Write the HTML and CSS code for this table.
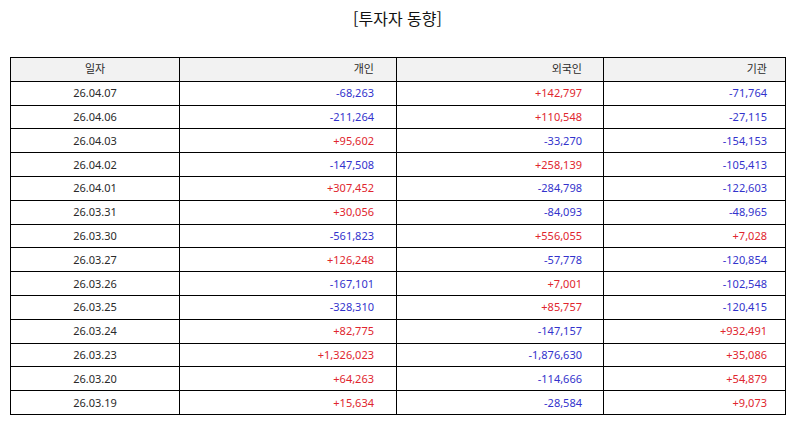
FILE: index.html
```html
<!DOCTYPE html>
<html lang="ko">
<head>
<meta charset="utf-8">
<link rel="stylesheet" href="styles.css">
</head>
<body>
<div class="page">
  <h1 class="title">[투자자 동향]</h1>
  <table class="grid">
    <colgroup>
      <col class="c-date"><col class="c-ind"><col class="c-for"><col class="c-ins">
    </colgroup>
    <thead>
      <tr><th class="date">일자</th><th class="num p1">개인</th><th class="num p2">외국인</th><th class="num p3">기관</th></tr>
    </thead>
    <tbody>
      <tr><td class="date">26.04.07</td><td class="num p1 neg">-68,263</td><td class="num p2 pos">+142,797</td><td class="num p3 neg">-71,764</td></tr>
      <tr><td class="date">26.04.06</td><td class="num p1 neg">-211,264</td><td class="num p2 pos">+110,548</td><td class="num p3 neg">-27,115</td></tr>
      <tr><td class="date">26.04.03</td><td class="num p1 pos">+95,602</td><td class="num p2 neg">-33,270</td><td class="num p3 neg">-154,153</td></tr>
      <tr><td class="date">26.04.02</td><td class="num p1 neg">-147,508</td><td class="num p2 pos">+258,139</td><td class="num p3 neg">-105,413</td></tr>
      <tr><td class="date">26.04.01</td><td class="num p1 pos">+307,452</td><td class="num p2 neg">-284,798</td><td class="num p3 neg">-122,603</td></tr>
      <tr><td class="date">26.03.31</td><td class="num p1 pos">+30,056</td><td class="num p2 neg">-84,093</td><td class="num p3 neg">-48,965</td></tr>
      <tr><td class="date">26.03.30</td><td class="num p1 neg">-561,823</td><td class="num p2 pos">+556,055</td><td class="num p3 pos">+7,028</td></tr>
      <tr><td class="date">26.03.27</td><td class="num p1 pos">+126,248</td><td class="num p2 neg">-57,778</td><td class="num p3 neg">-120,854</td></tr>
      <tr><td class="date">26.03.26</td><td class="num p1 neg">-167,101</td><td class="num p2 pos">+7,001</td><td class="num p3 neg">-102,548</td></tr>
      <tr><td class="date">26.03.25</td><td class="num p1 neg">-328,310</td><td class="num p2 pos">+85,757</td><td class="num p3 neg">-120,415</td></tr>
      <tr><td class="date">26.03.24</td><td class="num p1 pos">+82,775</td><td class="num p2 neg">-147,157</td><td class="num p3 pos">+932,491</td></tr>
      <tr><td class="date">26.03.23</td><td class="num p1 pos">+1,326,023</td><td class="num p2 neg">-1,876,630</td><td class="num p3 pos">+35,086</td></tr>
      <tr><td class="date">26.03.20</td><td class="num p1 pos">+64,263</td><td class="num p2 neg">-114,666</td><td class="num p3 pos">+54,879</td></tr>
      <tr><td class="date">26.03.19</td><td class="num p1 pos">+15,634</td><td class="num p2 neg">-28,584</td><td class="num p3 pos">+9,073</td></tr>
    </tbody>
  </table>
</div>
</body>
</html>
```
FILE: styles.css
```css
html, body {
  margin: 0;
  padding: 0;
  background: #ffffff;
}
.page {
  padding: 0 10px;
  font-family: "Noto Sans", "Noto Sans CJK KR", sans-serif;
  color: #222222;
}
.title {
  margin: 0;
  height: 57px;
  padding-top: 6px;
  box-sizing: border-box;
  font-family: "Noto Sans CJK KR", "Noto Sans", sans-serif;
  font-size: 16px;
  font-weight: normal;
  line-height: 24px;
  text-align: center;
  color: #111111;
}
.grid {
  width: 775px;
  border-collapse: collapse;
  table-layout: fixed;
  font-size: 11px;
}
.c-date { width: 169px; }
.c-ind { width: 217px; }
.c-for { width: 207px; }
.c-ins { width: 182px; }
.grid tr { height: 23.8px; }
.grid th, .grid td {
  border: 1px solid #000000;
  padding: 0;
  font-weight: normal;
  line-height: 14px;
  vertical-align: middle;
  color: #2a2a2a;
}
.grid th {
  background: #f2f2f2;
}
.date { text-align: center; }
.num { text-align: right; }
.p1 { padding-right: 22px !important; }
.p2 { padding-right: 21px !important; }
.p3 { padding-right: 18px !important; }
.grid td.pos { color: #e0262e; }
.grid td.neg { color: #3333cc; }
```
